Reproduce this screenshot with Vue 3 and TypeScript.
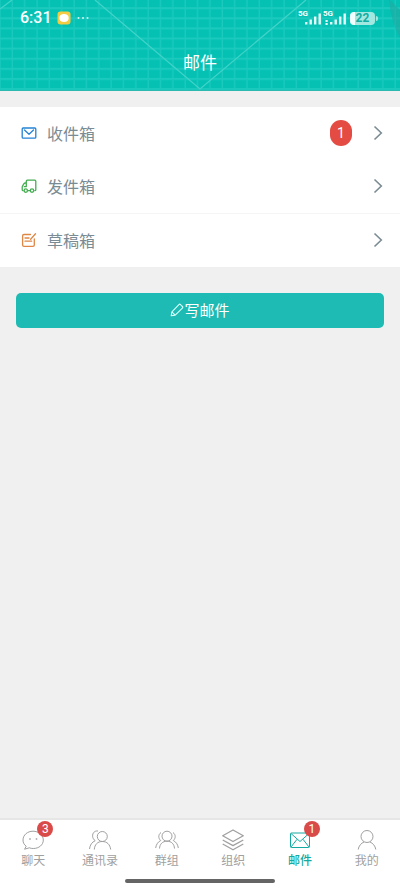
<script setup lang="ts">
import { ref } from 'vue'

interface Folder {
  id: 'inbox' | 'outbox' | 'drafts'
  label: string
  unread?: number
}

interface Tab {
  id: 'chat' | 'contacts' | 'groups' | 'org' | 'mail' | 'me'
  label: string
  badge?: number
}

const folders: Folder[] = [
  { id: 'inbox', label: '收件箱', unread: 1 },
  { id: 'outbox', label: '发件箱' },
  { id: 'drafts', label: '草稿箱' },
]

const tabs: Tab[] = [
  { id: 'chat', label: '聊天', badge: 3 },
  { id: 'contacts', label: '通讯录' },
  { id: 'groups', label: '群组' },
  { id: 'org', label: '组织' },
  { id: 'mail', label: '邮件', badge: 1 },
  { id: 'me', label: '我的' },
]

const activeTab = ref<Tab['id']>('mail')
</script>

<template>
  <div class="screen">
    <header class="header">
      <svg class="header-art" viewBox="0 0 400 91" preserveAspectRatio="none" aria-hidden="true">
        <defs>
          <pattern id="grid" x="0.7" y="7.2" width="12.35" height="10.1" patternUnits="userSpaceOnUse">
            <path d="M0 1.1H12.35M12 0V10.1" stroke="#1bc9bd" stroke-width="2.1" fill="none" />
          </pattern>
        </defs>
        <rect width="400" height="91" fill="#04c1b4" />
        <rect width="400" height="91" fill="url(#grid)" />
        <path d="M95 0L200 89L306 0M12 0L0 9" fill="none" stroke="#42d3c8" stroke-width="1.3" />
        <path d="M389 0Q391 22 400 38V10L390 0Z" fill="#23aaa2" opacity=".6" />
        <path d="M0 90.5H400" stroke="#2bb9b0" />
      </svg>
      <div class="status">
        <div class="status-side">
          <span class="clock">6:31</span>
          <svg width="14" height="14" viewBox="0 0 14 14" aria-hidden="true">
            <rect x=".5" y=".5" width="13" height="13" rx="3" fill="#f3cc43" />
            <path d="M2.300 7C2.300 4.500 4.200 3 7 3s4.700 1.500 4.700 4S9.800 11 7 11S2.300 9.500 2.300 7Z" fill="#fff" />
          </svg>
          <svg width="14" height="14" viewBox="0 0 14 14" fill="#d5f6f2" aria-hidden="true">
            <circle cx="2.500" cy="7" r="1" /><circle cx="7" cy="7" r="1" /><circle cx="11.500" cy="7" r="1" />
          </svg>
        </div>
        <div class="status-side status-right">
          <span class="signal">
            <span class="network">5G</span>
            <svg width="24" height="14" viewBox="0 0 24 14" fill="#e4faf8" aria-hidden="true">
              <path d="M7 11h2.400v2.500H7zM11.500 8.500h2.400v5h-2.400zM16 5.500h2.400v8H16zM20.500 2.500h2.400v11h-2.400z" />
            </svg>
          </span>
          <span class="signal">
            <span class="network">5G</span>
            <svg width="24" height="14" viewBox="0 0 24 14" fill="#e4faf8" aria-hidden="true">
              <path d="M2.500 9h2.200v2H2.500zM2.500 12h2.200v2H2.500zM7 11h2.400v2.500H7zM11.500 8.500h2.400v5h-2.400zM16 5.500h2.400v8H16zM20.500 2.500h2.400v11h-2.400z" />
            </svg>
          </span>
          <span class="battery">22</span>
          <span class="battery-cap"></span>
        </div>
      </div>
      <h1 class="title">邮件</h1>
    </header>

    <main class="content">
      <ul class="folders">
        <li v-for="folder in folders" :key="folder.id" class="folder-item">
          <a class="folder" :href="`#${folder.id}`">
            <svg class="folder-icon" :class="folder.id" viewBox="0 0 16 16" aria-hidden="true">
              <template v-if="folder.id === 'inbox'">
                <rect x="1.200" y="3" width="13.600" height="10.200" rx="1" />
                <path d="M3.500 5L8 9.200L12.500 5" />
              </template>
              <template v-else-if="folder.id === 'outbox'">
                <path d="M6.500 12.700h2.600M5.300 8.500V3.200c0-.6.400-1 1-1h7.500c.6 0 1 .4 1 1v8.600c0 .5-.3.900-.9.900M5.300 5H4.200c-.6 0-.9.200-1.200.7L1.500 8.200c-.2.300-.3.600-.3 1v2.300c0 .7.300 1.200.9 1.200M3.300 8.600h2" />
                <circle cx="4.800" cy="12.600" r="1.700" />
                <circle cx="11" cy="12.600" r="1.700" />
              </template>
              <template v-else>
                <path d="M9.500 2.500H3c-.8 0-1.400.6-1.400 1.400v9c0 .8.600 1.400 1.400 1.400h8.900c.8 0 1.400-.6 1.400-1.400V7M14.500 1.800L9.600 7.200M4 6h4M4 9.200h6.600" />
              </template>
            </svg>
            <span class="folder-label">{{ folder.label }}</span>
            <span v-if="folder.unread" class="unread">{{ folder.unread }}</span>
            <svg class="chevron" viewBox="0 0 10 16" aria-hidden="true">
              <path d="M1.500 1.500L8.300 8L1.500 14.500" />
            </svg>
          </a>
        </li>
      </ul>

      <button class="compose" type="button">
        <svg class="compose-icon" viewBox="0 0 14 14" aria-hidden="true">
          <path d="M1.200 12.800L1.900 8.900L8.900 1.600q.8-.8 1.600 0L12.400 3.500q.8.800 0 1.600L5.200 12.100ZM1.900 8.900L5.200 12.100" />
        </svg>
        <span>写邮件</span>
      </button>
    </main>

    <footer class="footer">
      <nav class="tabs">
        <a
          v-for="tab in tabs"
          :key="tab.id"
          class="tab"
          :class="{ active: tab.id === activeTab }"
          :href="`#${tab.id}`"
          @click="activeTab = tab.id"
        >
          <span class="tab-figure">
            <svg class="tab-icon" viewBox="0 0 24 24" aria-hidden="true">
              <template v-if="tab.id === 'chat'">
                <path d="M5.200 18.200C3 16.700 2 14.500 2 12C2 7 6.500 3.200 12 3.200S22.300 7 22.300 12S17.800 20.500 12.300 20.500c-1.500 0-2.700-.2-4-.7L3.600 21.200Z" />
                <path d="M9 10.300v1.400M15.500 10.300v1.400" stroke-width="1.500" />
              </template>
              <template v-else-if="tab.id === 'contacts'">
                <circle cx="14.300" cy="8.500" r="5" />
                <path d="M6.300 21.500C6.700 16.500 9.500 13.500 14.300 13.500S22 16.500 22.700 21.500M10 3C6.500 2.500 4.400 5.200 4.600 8.200C4.700 10.200 5.700 11.700 7.200 12.700C4 14 1.900 17 1.500 21" />
              </template>
              <template v-else-if="tab.id === 'groups'">
                <circle cx="12" cy="8.200" r="5" />
                <path d="M4.500 20.500C4.800 16 7.500 13.200 12 13.200S19.200 16 19.500 20.500M6 4.500C2.900 6.800 3.300 10.500 5.700 12.500C2.700 14 1 17 .7 20M18 4.500C21.100 6.800 20.700 10.500 18.300 12.500C21.300 14 23 17 23.300 20" />
              </template>
              <template v-else-if="tab.id === 'org'">
                <path d="M12 2L22.300 7.700L12 13.500L1.700 7.700ZM1.700 12L12 17.600L22.300 12M1.700 16L12 21.800L22.300 16" stroke-width="1.300" />
              </template>
              <template v-else-if="tab.id === 'mail'">
                <rect x="2.500" y="5" width="19" height="14.500" rx=".8" />
                <path d="M3 5.500L12 13.500L21 5.500M3 19L9 11.300M21 19L15 11.300" />
              </template>
              <template v-else>
                <circle cx="12" cy="8.500" r="6" />
                <path d="M3.200 21.500C3.700 18 6 15.200 9.200 13.900M14.800 13.900C18 15.200 20.300 18 20.800 21.500" />
              </template>
            </svg>
            <span v-if="tab.badge" class="badge">{{ tab.badge }}</span>
          </span>
          <span class="tab-label">{{ tab.label }}</span>
        </a>
      </nav>
      <div class="home-indicator"></div>
    </footer>
  </div>
</template>

<style>
body {
  margin: 0;
  background: #f0f0f0;
}
</style>

<style scoped>
.screen {
  display: flex;
  flex-direction: column;
  min-height: 100vh;
  background: #f0f0f0;
  font-family: 'Noto Sans CJK SC', sans-serif;
}

.header {
  position: relative;
  color: #fff;
  padding-bottom: 17px;
}

.header-art {
  position: absolute;
  inset: 0;
  width: 100%;
  height: 100%;
}

.status {
  position: relative;
  display: flex;
  justify-content: space-between;
  align-items: center;
  height: 36px;
  padding: 0 22px 0 20px;
}

.status-side {
  display: flex;
  align-items: center;
  gap: 5px;
}

.status-right {
  gap: 1px;
}

.clock {
  font: 500 16px/20px Roboto, sans-serif;
}

.signal {
  position: relative;
  display: flex;
}

.network {
  position: absolute;
  top: -3px;
  left: 0;
  font: 700 8px/12px Roboto, sans-serif;
}

.battery {
  margin-left: 2px;
  width: 25px;
  border-radius: 4px;
  background: linear-gradient(90deg, #f0fffd 22%, #a2e8e1 22%);
  color: #12aca1;
  font: 700 12px/13px Roboto, sans-serif;
  text-align: center;
}

.battery-cap {
  width: 2px;
  height: 5px;
  border-radius: 0 2px 2px 0;
  background: #a2e8e1;
}

.title {
  position: relative;
  margin: 0;
  padding-top: 14px;
  font-size: 17px;
  line-height: 24px;
  font-weight: 400;
  text-align: center;
}

.content {
  flex: 1;
  padding-top: 16px;
}

.folders {
  margin: 0;
  padding: 0;
  list-style: none;
  background: #fff;
}

.folder-item:last-child {
  border-top: 1px solid #f5f5f5;
}

.folder {
  display: flex;
  align-items: center;
  box-sizing: border-box;
  height: 53px;
  padding: 0 17px 2px 21px;
  color: #7b8b93;
  text-decoration: none;
}

.folder-icon {
  width: 16px;
  height: 16px;
  margin-right: 10px;
  fill: none;
  stroke-width: 1.3;
  stroke-linecap: round;
  stroke-linejoin: round;
}

.inbox {
  stroke: #2482d5;
}

.outbox {
  stroke: #43ad50;
}

.drafts {
  stroke: #df8645;
}

.folder-label {
  flex: 1;
  font-size: 16px;
  line-height: 24px;
}

.unread {
  width: 22px;
  margin-right: 21px;
  border-radius: 11px;
  background: #e34b43;
  color: #fff;
  font: 400 14px/26px Roboto, sans-serif;
  text-align: center;
}

.chevron {
  width: 10px;
  height: 16px;
  fill: none;
  stroke: #7b8b93;
  stroke-width: 1.6;
}

.compose {
  display: flex;
  justify-content: center;
  align-items: center;
  width: calc(100% - 32px);
  height: 35px;
  margin: 26px 16px 0;
  padding: 0 0 1px;
  border: 0;
  border-radius: 5px;
  background: #1dbbb3;
  color: #fff;
  font-family: inherit;
  font-size: 15px;
  line-height: 22px;
}

.compose-icon {
  width: 14px;
  height: 14px;
  fill: none;
  stroke: #d7fffb;
  stroke-width: 1.1;
  stroke-linejoin: round;
}

.footer {
  border-top: 2px solid #e6e6e6;
  background: #fff;
}

.tabs {
  display: grid;
  grid-template-columns: repeat(6, 1fr);
}

.tab {
  display: flex;
  flex-direction: column;
  align-items: center;
  padding-top: 8px;
  color: #a0a0a0;
  text-decoration: none;
}

.tab-figure {
  position: relative;
  display: flex;
}

.tab-icon {
  width: 24px;
  height: 24px;
  fill: none;
  stroke: currentColor;
  stroke-width: 1;
  stroke-linejoin: round;
}

.badge {
  position: absolute;
  top: -7px;
  right: -8px;
  min-width: 16px;
  border-radius: 8px;
  background: #d94b49;
  color: #fff;
  font: 400 12px/16px Roboto, sans-serif;
  text-align: center;
}

.tab-label {
  font-size: 12px;
  line-height: 16px;
}

.active {
  color: #14aaa1;
}

.active .tab-label {
  font-weight: 500;
}

.home-indicator {
  width: 150px;
  height: 4px;
  margin: 11px auto 6px;
  border-radius: 2px;
  background: #656565;
}
</style>
